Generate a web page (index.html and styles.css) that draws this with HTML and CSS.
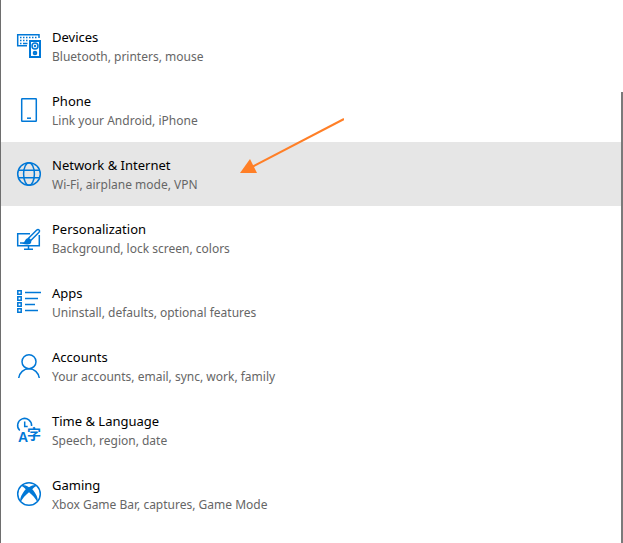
FILE: index.html
```html
<!DOCTYPE html>
<html lang="en">
<head>
    <meta charset="UTF-8">
    <meta name="viewport" content="width=device-width, initial-scale=1.0">
    <title>Settings</title>
    <link rel="stylesheet" href="styles.css">
</head>
<body>
    <div class="window">
        <nav class="settings-list">
            <a class="item" href="#devices">
                <svg class="icon" viewBox="0 0 24 24" aria-hidden="true">
                    <path d="M22 4V.7H.7v11H10" />
                    <path d="M3 3.500h18" stroke-dasharray="1.5 1.5" />
                    <path d="M3 6.500h8" stroke-dasharray="1.5 1.5" />
                    <path d="M3 9.500h1.500M6 9.500h4.500" />
                    <rect x="13" y="7" width="10" height="16" stroke-width="2" />
                    <circle cx="18" cy="12" r="3" />
                    <circle cx="18" cy="12" r=".5" />
                    <circle cx="18" cy="19" r="1.3" stroke-width="2" />
                </svg>
                <span class="text">
                    <span class="title">Devices</span>
                    <span class="desc">Bluetooth, printers, mouse</span>
                </span>
            </a>

            <a class="item" href="#phone">
                <svg class="icon" viewBox="0 0 24 24" aria-hidden="true">
                    <rect x="4.7" y=".7" width="14.6" height="22.6" rx=".5" />
                    <path d="M10 20.2h4" />
                </svg>
                <span class="text">
                    <span class="title">Phone</span>
                    <span class="desc">Link your Android, iPhone</span>
                </span>
            </a>

            <a class="item selected" href="#network">
                <svg class="icon" viewBox="0 0 24 24" aria-hidden="true">
                    <circle cx="12" cy="12" r="11.3" />
                    <ellipse cx="12" cy="12" rx="5.4" ry="11.3" />
                    <path d="M1.5 8.3h21M1.5 15.7h21" />
                </svg>
                <span class="text">
                    <span class="title">Network &amp; Internet</span>
                    <span class="desc">Wi-Fi, airplane mode, VPN</span>
                </span>
                <svg class="arrow" viewBox="0 0 104 55" aria-hidden="true">
                    <path class="arrow-line" d="M104 1L12 49" />
                    <path class="arrow-head" d="M0 55l10-14 7 14z" />
                </svg>
            </a>

            <a class="item" href="#personalization">
                <svg class="icon" viewBox="0 0 24 24" aria-hidden="true">
                    <path d="M13 7.7H.7v12h21.6V9" />
                    <path d="M11.5 20v3M7 23.2h9" />
                    <path d="M11.5 12.3l8-8c1.9-1.9 4.2.3 2.3 2.2l-8 8z" />
                    <path class="solid" d="M11.3 12l3 3c.4 3.6-3.3 4.2-9.3 2.7 3.2-.6 2.3-5 6.3-5.7z" />
                    <path d="M3 17h4" />
                </svg>
                <span class="text">
                    <span class="title">Personalization</span>
                    <span class="desc">Background, lock screen, colors</span>
                </span>
            </a>

            <a class="item" href="#apps">
                <svg class="icon" viewBox="0 0 24 24" aria-hidden="true">
                    <path d="M.8.8h3.4v3.4H.8zM.8 6.8h3.4v3.4H.8zM.8 12.8h3.4v3.4H.8zM.8 18.8h3.4v3.4H.8z" />
                    <path d="M8 2.5h16M8 8.5h13M8 14.5h10M8 20.5h13" />
                </svg>
                <span class="text">
                    <span class="title">Apps</span>
                    <span class="desc">Uninstall, defaults, optional features</span>
                </span>
            </a>

            <a class="item" href="#accounts">
                <svg class="icon" viewBox="0 0 24 24" aria-hidden="true">
                    <circle cx="12" cy="7.7" r="7" />
                    <path d="M1.7 24c.8-5.4 5-9.3 10.3-9.3s9.5 3.9 10.3 9.3" />
                </svg>
                <span class="text">
                    <span class="title">Accounts</span>
                    <span class="desc">Your accounts, email, sync, work, family</span>
                </span>
            </a>

            <a class="item" href="#time">
                <svg class="icon" viewBox="0 0 24 24" aria-hidden="true">
                    <path d="M2.8 12.5A7 7 0 1 1 14.6 8" />
                    <path d="M7.7 3.5v5h3" />
                    <text class="glyph latin" x="1" y="24">A</text>
                    <text class="glyph kanji" x="10" y="21">字</text>
                </svg>
                <span class="text">
                    <span class="title">Time &amp; Language</span>
                    <span class="desc">Speech, region, date</span>
                </span>
            </a>

            <a class="item" href="#gaming">
                <svg class="icon" viewBox="0 0 24 24" aria-hidden="true">
                    <circle cx="12" cy="12" r="11.3" />
                    <path class="solid" d="M3.5 4C5 2.3 8.5 3 12 5.2 15.5 3 19 2.3 20.5 4c-1.9-.1-3.6 1.3-5.2 3.3 3.6 4.2 6.3 9 5.2 13C18.5 16.5 15.5 13 12 10.3 8.5 13 5.5 16.5 3.5 20.3c-1.1-4 1.6-8.800 5.200-13C7.100 5.300 5.400 3.900 3.500 4z" />
                </svg>
                <span class="text">
                    <span class="title">Gaming</span>
                    <span class="desc">Xbox Game Bar, captures, Game Mode</span>
                </span>
            </a>
        </nav>
        <div class="scrollbar"></div>
    </div>
</body>
</html>
```
FILE: styles.css
```css
* {
    box-sizing: border-box;
}

body {
    margin: 0;
    background: #fff;
    font-family: 'Noto Sans', 'Open Sans', 'Noto Sans CJK SC', sans-serif;
}

.window {
    display: flex;
    min-height: 100vh;
    border-left: 1px solid #6e6e6e;
}

.settings-list {
    flex: 1;
    padding-top: 14px;
}

.item {
    position: relative;
    display: flex;
    align-items: center;
    gap: 11px;
    height: 64px;
    padding-left: 16px;
    color: #000;
    text-decoration: none;
}

.item.selected {
    background: #e6e6e6;
}

.icon {
    width: 24px;
    height: 24px;
    overflow: visible;
    fill: none;
    stroke: #0078d7;
    stroke-width: 1.5;
}

.icon .solid {
    fill: #0078d7;
    stroke: none;
}

.icon .glyph {
    fill: #0078d7;
    stroke: none;
    font-weight: bold;
}

.latin {
    font-family: 'Liberation Sans', sans-serif;
    font-size: 14px;
}

.kanji {
    font-family: 'Noto Sans CJK SC', sans-serif;
    font-size: 14px;
}

.text {
    display: flex;
    flex-direction: column;
    padding-top: 2px;
}

.title {
    font-size: 13px;
    line-height: 20px;
}

.desc {
    font-size: 12px;
    line-height: 20px;
    color: #666;
}

/* pointer drawn over the selected row */
.arrow {
    position: absolute;
    left: 239px;
    top: -24px;
    width: 104px;
    height: 55px;
}

.arrow-line {
    fill: none;
    stroke: #ff7f27;
    stroke-width: 2;
}

.arrow-head {
    fill: #ff7f27;
}

.scrollbar {
    width: 2px;
    margin-top: 92px;
    background: #7a7a7a;
}
```
